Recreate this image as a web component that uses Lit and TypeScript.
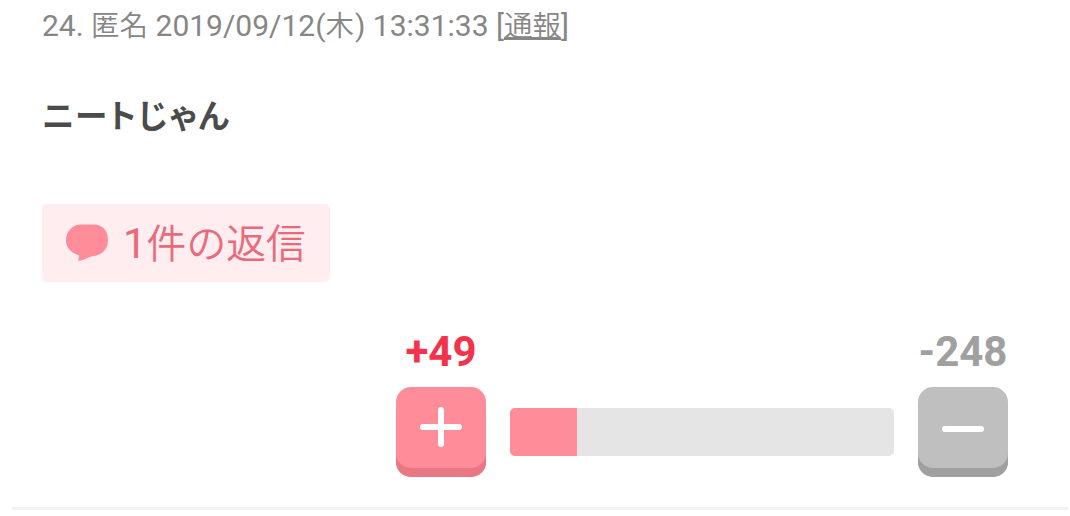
import { css, html, LitElement } from "lit";
import { customElement, property } from "lit/decorators.js";

@customElement("reply-button")
export class ReplyButtonElement extends LitElement {
  @property({ type: Number })
  count: number = 0;

  render() {
    return html`<button class="reply">
      <svg class="bubble" width="43" height="39" viewBox="0 0 43 39">
        <path
          d="M15 .5H28C37 .5 42 7.5 42 16C42 25.5 36 31.5 26 32.2C22 34 17 36 12.2 37L13 31.2C5 29 0 23.5 0 16.5C0 7.5 6 .5 15 .5Z"
        />
      </svg>
      <span class="label">${this.count}<span class="jp">件の返信</span></span>
    </button>`;
  }

  static styles = css`
    :host {
      display: block;
    }

    .reply {
      display: flex;
      align-items: center;
      box-sizing: border-box;
      width: 288px;
      height: 78px;
      padding: 0 0 0 24px;
      gap: 14px;
      border: 0;
      border-radius: 5px;
      background: #ffedef;
      color: #e96a7b;
      font: 42px/78px Roboto, "Noto Sans CJK JP", sans-serif;
      white-space: nowrap;
    }

    .bubble {
      flex: none;
      fill: #ff8d99;
    }

    .label {
      padding-top: 3px;
    }

    .jp {
      font-size: 39.8px;
      font-weight: 350;
    }
  `;
}

@customElement("vote-button")
export class VoteButtonElement extends LitElement {
  @property()
  kind: string = "plus";

  @property()
  score: string = "";

  render() {
    const plus = this.kind === "plus";
    return html`<div class="vote ${this.kind}">
      <span class="score">${this.score}</span>
      <button class="key">
        <svg width="90" height="90" viewBox="0 0 90 90">
          <path
            d=${plus ? "M27 40H63M45 23V57" : "M27 42H63"}
          />
        </svg>
      </button>
    </div>`;
  }

  static styles = css`
    .vote {
      display: flex;
      flex-direction: column;
      align-items: center;
      width: 90px;
    }

    .score {
      height: 60px;
      font: bold 42px/50px Roboto, sans-serif;
      white-space: nowrap;
    }

    .key {
      width: 90px;
      height: 90px;
      padding: 0;
      border: 0;
      border-radius: 15px;
    }

    .key svg {
      display: block;
      fill: none;
      stroke: #fff;
      stroke-width: 6;
      stroke-linecap: round;
    }

    .plus .score {
      color: #f4334a;
    }

    .plus .key {
      background: #ff8d99;
      box-shadow: inset 0 -9px #e97784;
    }

    .minus .score {
      color: #a0a0a0;
    }

    .minus .key {
      background: #bfbfbf;
      box-shadow: inset 0 -9px #a0a0a0;
    }
  `;
}

@customElement("app-root")
export class AppRootElement extends LitElement {
  @property({ type: Number })
  ratio: number = 17.45;

  render() {
    return html`<article class="comment">
      <div class="info">
        24. <span class="jp">匿名</span> 2019/09/12(<span class="jp day">木</span>)
        13:31:33 [<a class="report"><span class="jp">通報</span></a>]
      </div>
      <p class="body">ニートじゃん</p>
      <reply-button .count=${1}></reply-button>
      <div class="votes">
        <vote-button kind="plus" score="+49"></vote-button>
        <div class="bar">
          <div class="fill" style="width: ${this.ratio}%"></div>
        </div>
        <vote-button kind="minus" score="-248"></vote-button>
      </div>
    </article>`;
  }

  static styles = css`
    :host {
      display: block;
      height: 516px;
      overflow: hidden;
      background: #fff;
      font-family: Roboto, "Noto Sans CJK JP", sans-serif;
    }

    .comment {
      box-sizing: border-box;
      width: 1056px;
      height: 510px;
      margin-left: 12px;
      padding: 0 60px 0 30px;
      border-bottom: 3px solid #f3f3f3;
    }

    .info {
      height: 90px;
      color: #868686;
      font-size: 30px;
      line-height: 52px;
      white-space: nowrap;
    }

    .info .jp {
      font-size: 28.5px;
      font-weight: 350;
    }

    .info .day {
      letter-spacing: 1px;
    }

    .report {
      text-decoration: underline;
      text-decoration-thickness: 3px;
      text-decoration-skip-ink: none;
      text-underline-offset: 1px;
    }

    .body {
      height: 114px;
      margin: 0;
      color: #4b4b4b;
      font: bold 32.5px/48px "Noto Sans CJK JP", sans-serif;
      font-feature-settings: "palt";
      letter-spacing: 1.7px;
    }

    .votes {
      display: flex;
      justify-content: flex-end;
      gap: 24px;
      padding-top: 45px;
    }

    .bar {
      width: 384px;
      height: 48px;
      margin-top: 81px;
      border-radius: 5px;
      background: #e5e5e5;
      overflow: hidden;
    }

    .fill {
      height: 100%;
      background: #ff8d99;
    }
  `;
}
